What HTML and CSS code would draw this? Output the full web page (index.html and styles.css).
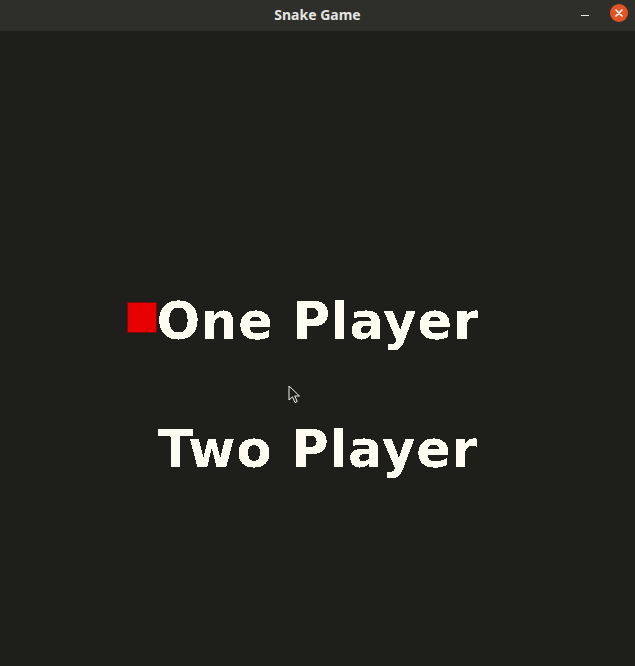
FILE: index.html
```html
<!DOCTYPE html>
<html>
<head>
<meta charset="utf-8">
<title>Snake Game</title>
<link rel="stylesheet" href="styles.css">
</head>
<body>
<svg class="defs" width="0" height="0" aria-hidden="true">
  <filter id="crisp" x="0" y="0" width="100%" height="100%">
    <feComponentTransfer>
      <feFuncA type="discrete" tableValues="0 1"/>
    </feComponentTransfer>
  </filter>
</svg>
<div class="window">
  <header class="titlebar">
    <span class="title">Snake Game</span>
    <div class="controls">
      <span class="minimize"></span>
      <span class="close">
        <svg width="18" height="18" viewBox="0 0 18 18"><circle cx="9" cy="9" r="9" fill="#e25426"/><path d="M6 6 L12 12 M12 6 L6 12" stroke="#fff" stroke-width="1.6" stroke-linecap="round"/></svg>
      </span>
    </div>
  </header>
  <main class="game">
    <div class="menu-item selected"><span class="label">One Player</span></div>
    <div class="menu-item"><span class="label">Two Player</span></div>
    <svg class="cursor" width="14" height="20" viewBox="0 0 14 20"><path d="M1 1 L1 15 L4.5 11.8 L7 17.5 L9.2 16.5 L6.8 11 L11.5 11 Z" fill="#1e1e1a" stroke="#f0f0f0" stroke-width="1"/></svg>
  </main>
</div>
</body>
</html>
```
FILE: styles.css
```css
html, body {
  margin: 0;
  padding: 0;
  background: #1e1e1a;
}
.defs {
  position: absolute;
}
.window {
  width: 635px;
  height: 666px;
  display: flex;
  flex-direction: column;
  overflow: hidden;
}
.titlebar {
  height: 31px;
  flex: none;
  background: #2e2e2b;
  display: flex;
  align-items: center;
  justify-content: center;
  position: relative;
}
.title {
  font-family: "Noto Sans", "DejaVu Sans", sans-serif;
  font-weight: bold;
  font-size: 14px;
  color: #e4e4e0;
  margin-top: -3px;
}
.controls {
  position: absolute;
  right: 7px;
  top: 4px;
  display: flex;
  align-items: center;
  gap: 21px;
}
.minimize {
  width: 8px;
  height: 1px;
  background: #e8e8e4;
  margin-top: 4px;
}
.close {
  width: 18px;
  height: 18px;
  display: block;
}
.close svg {
  display: block;
}
.game {
  flex: 1;
  display: flex;
  flex-direction: column;
  align-items: center;
  padding-top: 265px;
  gap: 77px;
  position: relative;
}
.menu-item {
  position: relative;
  height: 51px;
}
.label {
  display: block;
  font-family: "DejaVu Sans", sans-serif;
  font-weight: bold;
  font-size: 51px;
  line-height: 51px;
  letter-spacing: 1px;
  margin-right: -1px;
  color: #fcfcf2;
  white-space: nowrap;
  filter: url(#crisp);
}
.selected::before {
  content: "";
  position: absolute;
  right: calc(100% + 0px);
  top: 6px;
  width: 28px;
  height: 29px;
  background: #e60000;
  border: 1px solid #7a0a0a;
}
.cursor {
  position: absolute;
  left: 288px;
  top: 354px;
}
```
